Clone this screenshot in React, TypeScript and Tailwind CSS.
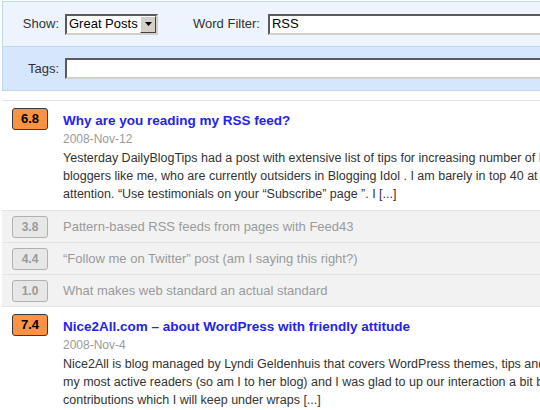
import React from "react";

type GreyPost = { score: string; title: string };

const greyPosts: GreyPost[] = [
  { score: "3.8", title: "Pattern-based RSS feeds from pages with Feed43" },
  { score: "4.4", title: "“Follow me on Twitter” post (am I saying this right?)" },
  { score: "1.0", title: "What makes web standard an actual standard" },
];

const insetBox =
  "border-2 border-t-[#5a5a5a] border-l-[#5a5a5a] border-b-[#d4d0c8] border-r-[#d4d0c8] bg-white";

const GreatPost = (props: { score: string; title: string; date: string; lines: string[] }) => {
  const { score, title, date, lines } = props;
  return (
    <div className="flex border-t border-[#e3e3e3] pl-[10px] pt-[7px] pb-[7px]">
      <div className="w-[36px] h-[22px] shrink-0 flex items-center justify-center rounded-[3px] border border-[#3a3a3a] bg-[#fd9243] text-[13px] font-bold text-black">
        {score}
      </div>
      <div className="ml-[15px] pt-[4px]">
        <div className="text-[13.5px] leading-[18px] font-bold text-[#2323ec] whitespace-nowrap">{title}</div>
        <div className="text-[12px] leading-[18px] text-[#9a9a9a]">{date}</div>
        <div className="mt-[1px] text-[12.5px] leading-[18px] text-[#333]">
          {lines.map((line, i) => (
            <div key={i} className="whitespace-nowrap">{line}</div>
          ))}
        </div>
      </div>
    </div>
  );
};

const App = () => {
  return (
    <div className="w-[540px] h-[410px] overflow-hidden bg-white font-['Liberation_Sans',Arial,sans-serif]">
      <div className="w-[700px] ml-[2px] pt-[1px]">
        {/* filter panel */}
        <div className="border border-[#c1d7f6]">
          <div className="h-[45px] flex items-center bg-[#edf4fe] border-b border-[#c1d7f6]">
            <div className="w-[56px] text-right text-[13px] text-[#333]">Show:</div>
            <div className={`ml-[6px] w-[93px] h-[21px] flex items-center justify-between ${insetBox}`}>
              <span className="pl-[2px] text-[13px] text-black">Great Posts</span>
              <div className="w-[16px] h-[17px] flex items-center justify-center bg-[#d4d0c8] border border-t-white border-l-white border-b-[#404040] border-r-[#404040]">
                <svg width="7" height="4" viewBox="0 0 7 4">
                  <path d="M0 0 H7 L3.5 4 Z" fill="#000" />
                </svg>
              </div>
            </div>
            <div className="ml-[35px] text-[13px] text-[#333]">Word Filter:</div>
            <div className={`ml-[8px] flex-1 h-[21px] flex items-center ${insetBox}`}>
              <span className="pl-[2px] text-[13px] text-black">RSS</span>
            </div>
          </div>
          <div className="h-[43px] flex items-center bg-[#d6e6fc]">
            <div className="w-[56px] text-right text-[13px] text-[#333]">Tags:</div>
            <div className={`ml-[6px] flex-1 h-[21px] ${insetBox}`} />
          </div>
        </div>

        {/* posts */}
        <div className="mt-[9px]">
          <GreatPost
            score="6.8"
            title="Why are you reading my RSS feed?"
            date="2008-Nov-12"
            lines={[
              "Yesterday DailyBlogTips had a post with extensive list of tips for increasing number of RSS",
              "bloggers like me, who are currently outsiders in Blogging Idol . I am barely in top 40 at my",
              "attention. “Use testimonials on your “Subscribe” page ”. I [...]",
            ]}
          />
          {greyPosts.map((p) => (
            <div key={p.score} className="h-[32px] flex items-center border-t border-[#e3e3e3] bg-[#f2f2f2] pl-[10px]">
              <div className="w-[36px] h-[22px] shrink-0 flex items-center justify-center rounded-[3px] border border-[#b0b0b0] bg-[#e7e7e7] text-[12px] font-bold text-[#9a9a9a]">
                {p.score}
              </div>
              <div className="ml-[15px] text-[13px] text-[#9a9a9a] whitespace-nowrap">{p.title}</div>
            </div>
          ))}
          <GreatPost
            score="7.4"
            title="Nice2All.com – about WordPress with friendly attitude"
            date="2008-Nov-4"
            lines={[
              "Nice2All is blog managed by Lyndi Geldenhuis that covers WordPress themes, tips and",
              "my most active readers (so am I to her blog) and I was glad to up our interaction a bit by",
              "contributions which I will keep under wraps [...]",
            ]}
          />
        </div>
      </div>
    </div>
  );
};

export default App;
